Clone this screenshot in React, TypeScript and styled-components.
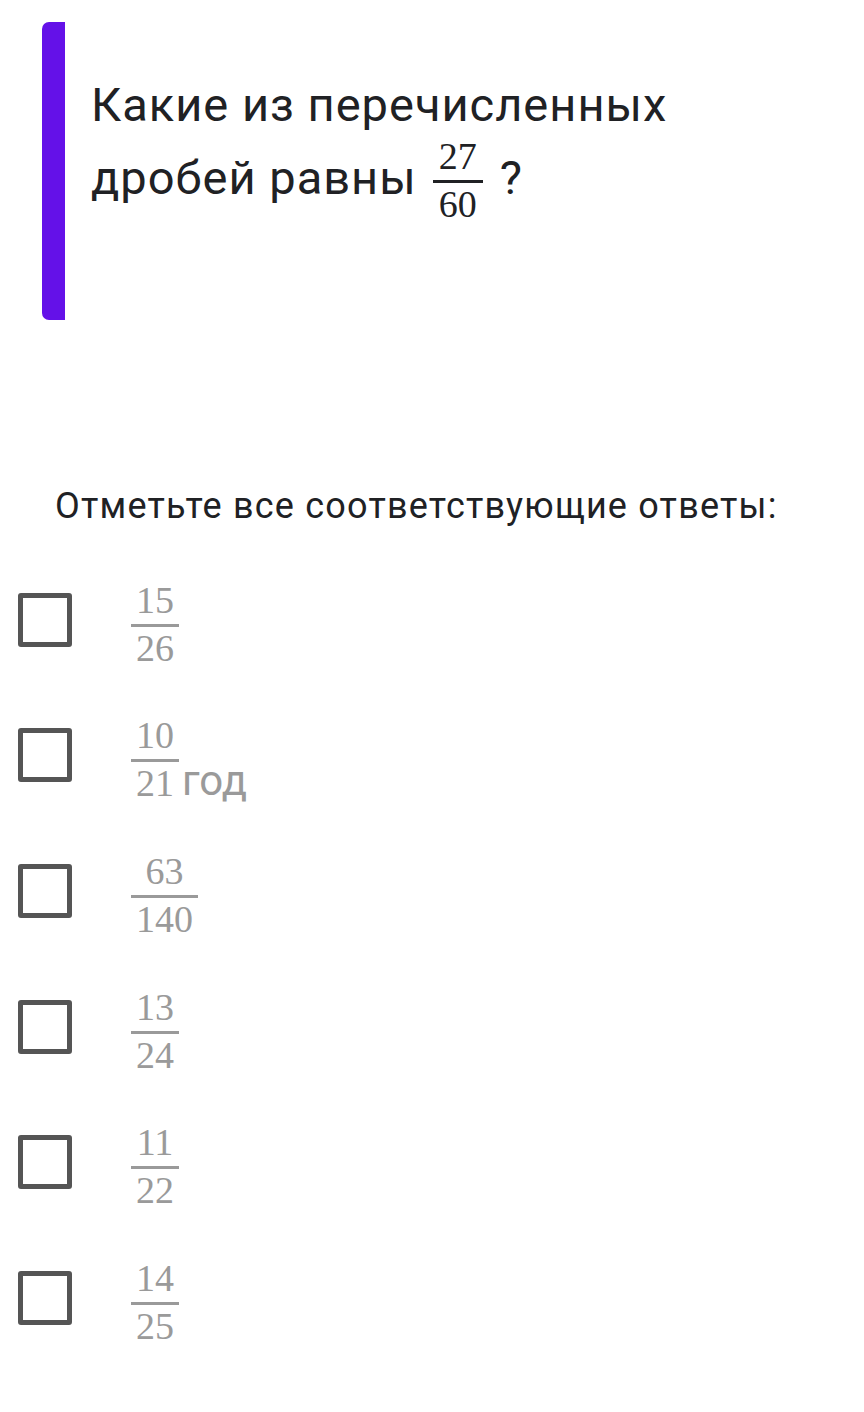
import React from "react";
import styled, {createGlobalStyle} from "styled-components";

const GlobalStyle = createGlobalStyle`
  html, body {
    margin: 0;
    padding: 0;
    background: #FFFFFF;
  }
  body {
    font-family: Roboto, "Noto Sans", sans-serif;
    color: #202124;
  }
`;

const Page = styled.div`
  display: flex;
  flex-direction: column;
  width: 864px;
  min-height: 1412px;
  padding-top: 22px;
  box-sizing: border-box;
`;

const QuestionCard = styled.section`
  display: flex;
  height: 298px;
  padding-left: 42px;
`;

const AccentBar = styled.div`
  flex: 0 0 23px;
  background: #6411E8;
  border-radius: 7px 0 0 7px;
`;

const QuestionText = styled.div`
  display: flex;
  flex-direction: column;
  padding: 46px 0 0 26px;
  font-size: 47px;
  line-height: 73px;
  letter-spacing: 1px;
  color: #202124;
`;

const QuestionLine = styled.div`
  display: flex;
  align-items: center;
  height: 73px;
  white-space: pre;
`;

const Fraction = styled.span<{ size: number; gray?: boolean }>`
  display: inline-flex;
  flex-direction: column;
  align-items: stretch;
  font-family: "Liberation Serif", "Times New Roman", serif;
  font-size: ${props => props.size}px;
  line-height: 1;
  letter-spacing: 0;
  color: ${props => props.gray ? '#9A9A9A' : '#202124'};
  text-align: center;
`;

const Num = styled.span<{ pad: number }>`
  padding: 0 ${props => props.pad}px;
`;

const Bar = styled.span<{ gray?: boolean }>`
  display: block;
  height: 3px;
  margin: 5px 0 2px;
  background: ${props => props.gray ? '#9A9A9A' : '#202124'};
`;

const QuestionFraction = styled.span`
  display: inline-flex;
  margin: 4px 17px 0 16px;
`;

const Prompt = styled.div`
  margin-top: 164px;
  padding-left: 55px;
  font-size: 36px;
  line-height: 44px;
  letter-spacing: 1.2px;
  color: #202124;
`;

const OptionList = styled.ul`
  display: flex;
  flex-direction: column;
  list-style: none;
  margin: 24px 0 0;
  padding: 0 0 0 18px;
`;

const Option = styled.li`
  display: flex;
  align-items: center;
  height: 135.6px;
  gap: 59px;
`;

const CheckBox = styled.span`
  flex: 0 0 auto;
  width: 54px;
  height: 54px;
  box-sizing: border-box;
  border: 5px solid #555555;
  border-radius: 3px;
`;

const OptionLabel = styled.span`
  display: flex;
  align-items: flex-end;
  margin-top: 8px;
`;

const Suffix = styled.span`
  font-size: 42px;
  line-height: 42px;
  color: #9A9A9A;
  margin-left: 3px;
`;

type Frac = { n: string; d: string; suffix?: string };

const options: Frac[] = [
  {n: "15", d: "26"},
  {n: "10", d: "21", suffix: "год"},
  {n: "63", d: "140"},
  {n: "13", d: "24"},
  {n: "11", d: "22"},
  {n: "14", d: "25"},
];

const FractionView: React.FC<{ f: Frac; size: number; pad: number; gray?: boolean }> = ({f, size, pad, gray}) => (
  <Fraction size={size} gray={gray}>
    <Num pad={pad}>{f.n}</Num>
    <Bar gray={gray}/>
    <Num pad={pad}>{f.d}</Num>
  </Fraction>
);

const App: React.FC = () => {
  return (
    <>
      <GlobalStyle/>
      <Page>
        <QuestionCard>
          <AccentBar/>
          <QuestionText>
            <QuestionLine>Какие из перечисленных</QuestionLine>
            <QuestionLine>
              дробей равны
              <QuestionFraction>
                <FractionView f={{n: "27", d: "60"}} size={38} pad={6}/>
              </QuestionFraction>
              ?
            </QuestionLine>
          </QuestionText>
        </QuestionCard>

        <Prompt>Отметьте все соответствующие ответы:</Prompt>

        <OptionList>
          {options.map((o, i) => (
            <Option key={i}>
              <CheckBox/>
              <OptionLabel>
                <FractionView f={o} size={38} pad={5} gray/>
                {o.suffix && <Suffix>{o.suffix}</Suffix>}
              </OptionLabel>
            </Option>
          ))}
        </OptionList>
      </Page>
    </>
  );
};

export default App;
